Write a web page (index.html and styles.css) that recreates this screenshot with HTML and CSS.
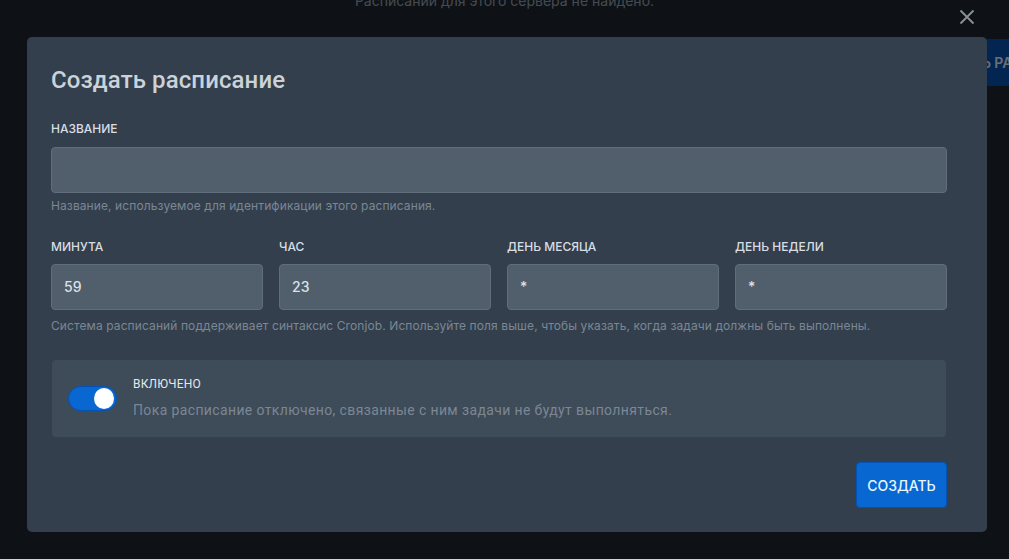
FILE: index.html
```html
<!DOCTYPE html>
<html lang="ru">
<head>
<meta charset="utf-8">
<title>Создать расписание</title>
<link rel="stylesheet" href="styles.css">
</head>
<body>
<div class="page">
  <p class="empty">Расписаний для этого сервера не найдено.</p>
  <div class="page-actions">
    <button class="page-btn">Создать расписание</button>
  </div>
</div>

<div class="overlay">
  <button class="close" aria-label="Закрыть">
    <svg width="16" height="16" viewBox="0 0 16 16"><path d="M1.5 1.5 L14.5 14.5 M14.5 1.5 L1.5 14.5" stroke="currentColor" stroke-width="1.8" fill="none"/></svg>
  </button>
  <div class="modal">
    <h2 class="title">Создать расписание</h2>

    <div class="field">
      <label class="label">Название</label>
      <input class="input" type="text" value="">
      <p class="help">Название, используемое для идентификации этого расписания.</p>
    </div>

    <div class="cron">
      <div class="field">
        <label class="label">Минута</label>
        <input class="input" type="text" value="59">
      </div>
      <div class="field">
        <label class="label">Час</label>
        <input class="input" type="text" value="23">
      </div>
      <div class="field">
        <label class="label">День месяца</label>
        <input class="input" type="text" value="*">
      </div>
      <div class="field">
        <label class="label">День недели</label>
        <input class="input" type="text" value="*">
      </div>
    </div>
    <p class="help">Система расписаний поддерживает синтаксис Cronjob. Используйте поля выше, чтобы указать, когда задачи должны быть выполнены.</p>

    <div class="switch-box">
      <span class="switch"><span class="knob"></span></span>
      <div class="switch-text">
        <div class="switch-label">Включено</div>
        <div class="switch-desc">Пока расписание отключено, связанные с ним задачи не будут выполняться.</div>
      </div>
    </div>

    <div class="actions">
      <button class="btn">Создать</button>
    </div>
  </div>
</div>
</body>
</html>
```

FILE: styles.css
```css
* { box-sizing: border-box; }

html, body {
  margin: 0;
  height: 100%;
}

body {
  background: #1f2933;
  font-family: Inter, "Noto Sans", sans-serif;
  overflow: hidden;
}

.empty {
  margin: -9px 0 0 0;
  text-align: center;
  font-size: 14px;
  line-height: 20px;
  color: #9aa5b1;
}

.page-actions {
  display: flex;
  justify-content: flex-end;
  margin-top: 28px;
  margin-right: -105px;
}

.page-btn {
  height: 47px;
  padding: 0 20px;
  background: #0552b5;
  border: 1px solid #0552b5;
  border-radius: 4px;
  color: #e6f6ff;
  font-family: Inter, sans-serif;
  font-size: 14px;
  font-weight: 600;
  text-transform: uppercase;
}

.overlay {
  position: fixed;
  inset: 0;
  background: rgba(0, 0, 0, 0.55);
  padding: 37px 22px 27px 27px;
}

.close {
  position: absolute;
  top: 9px;
  right: 34px;
  padding: 0;
  width: 16px;
  height: 16px;
  background: none;
  border: 0;
  color: #8a9199;
}

.close svg { display: block; }

.modal {
  width: 960px;
  height: 495px;
  background: #333f4c;
  border-radius: 5px;
  padding: 27px 40px 24px 24px;
}

.title {
  margin: 0 0 25px 0;
  font-family: Roboto, sans-serif;
  font-weight: 500;
  font-size: 24px;
  line-height: 32px;
  letter-spacing: 0.1px;
  color: #cbd2d9;
}

.field { display: flex; flex-direction: column; }

.label {
  display: block;
  font-size: 12px;
  line-height: 16px;
  font-weight: 500;
  text-transform: uppercase;
  color: #d8dee4;
  margin-bottom: 10px;
}

.input {
  width: 100%;
  height: 46px;
  background: #515f6c;
  border: 1px solid #606d7a;
  border-radius: 4px;
  padding: 0 12px 1px 12px;
  font-family: Inter, sans-serif;
  font-size: 14px;
  font-weight: 500;
  color: #dbe1e7;
  outline: none;
}

.help {
  margin: 5px 0 0 0;
  font-size: 12px;
  line-height: 16px;
  color: #7b8794;
  letter-spacing: 0.1px;
}

.cron {
  display: grid;
  grid-template-columns: repeat(4, 1fr);
  gap: 16px;
  margin-top: 25px;
}

.cron .label { margin-bottom: 9px; }

.cron + .help { margin-top: 8px; }

.switch-box {
  margin-top: 26px;
  margin-left: 1px;
  margin-right: 1px;
  display: flex;
  align-items: center;
  gap: 16px;
  background: #3e4b58;
  border-radius: 4px;
  padding: 16px 16px 17px 16px;
}

.switch {
  flex: none;
  width: 49px;
  height: 25px;
  border-radius: 13px;
  background: #0967d2;
  border: 1px solid #0552b5;
  display: flex;
  justify-content: flex-end;
  align-items: center;
  padding-right: 2px;
}

.knob {
  width: 20px;
  height: 21px;
  border-radius: 50%;
  background: #ffffff;
}

.switch-label {
  font-family: Roboto, sans-serif;
  font-size: 12px;
  line-height: 16px;
  font-weight: 400;
  text-transform: uppercase;
  letter-spacing: 0.2px;
  color: #e4e7eb;
  margin-bottom: 8px;
}

.switch-desc {
  font-family: Roboto, sans-serif;
  font-size: 14px;
  line-height: 20px;
  letter-spacing: 0.37px;
  color: #7b8794;
}

.actions {
  display: flex;
  justify-content: flex-end;
  margin-top: 25px;
}

.btn {
  width: 91px;
  height: 46px;
  background: #0967d2;
  border: 1px solid #0552b5;
  border-radius: 4px;
  color: #e6f6ff;
  font-family: Inter, sans-serif;
  font-size: 14px;
  font-weight: 500;
  text-transform: uppercase;
}
```
